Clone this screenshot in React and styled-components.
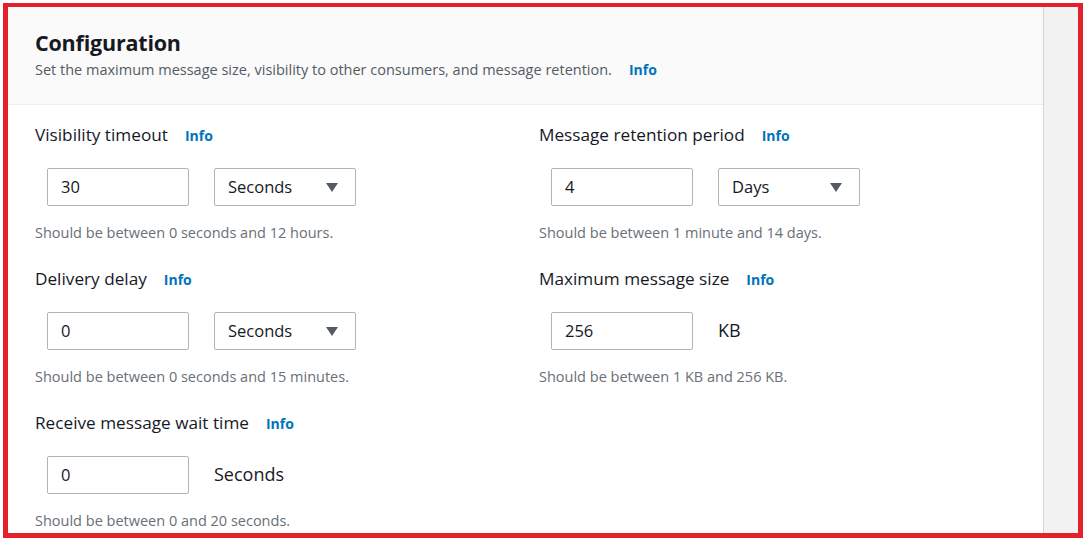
import styled, { createGlobalStyle } from 'styled-components';

const GlobalStyle = createGlobalStyle`
  body {
    margin: 0;
    background: #fff;
    font-family: "Open Sans", "Noto Sans", Arial, sans-serif;
    color: #16191f;
  }
`;

const Frame = styled.div`
  box-sizing: border-box;
  margin: 3px;
  width: 1080px;
  height: 535px;
  border: 5px solid #e4202c;
  border-top-width: 4px;
  display: flex;
  overflow: hidden;
`;

const Card = styled.section`
  flex: 1;
  min-width: 0;
  display: flex;
  flex-direction: column;
  background: #fff;
`;

const Gutter = styled.div`
  flex: 0 0 34px;
  background: #f2f2f2;
  border-left: 1px solid #d5d5d5;
`;

const Header = styled.header`
  flex-shrink: 0;
  background: #fafafa;
  border-bottom: 1px solid #eaeded;
  padding: 21px 27px 0;
  height: 76px;
`;

const Title = styled.h2`
  margin: 0;
  font-size: 21.5px;
  line-height: 30px;
  font-weight: 700;
  color: #16191f;
  letter-spacing: -0.2px;
`;

const Subtitle = styled.p`
  margin: 2px 0 0;
  font-size: 14.5px;
  line-height: 20px;
  color: #545b64;
`;

const InfoLink = styled.a`
  margin-left: 17px;
  font-size: 14px;
  font-weight: 700;
  color: #0073bb;
  text-decoration: none;
`;

const Body = styled.div`
  flex-shrink: 0;
  display: grid;
  grid-template-columns: 504px 504px;
  padding: 19px 27px 0;
`;

const Column = styled.div`
  display: flex;
  flex-direction: column;
`;

const Field = styled.div`
  height: 144px;
  display: flex;
  flex-direction: column;
`;

const Label = styled.div`
  font-size: 17.2px;
  line-height: 22px;
  color: #16191f;
`;

const Controls = styled.div`
  display: flex;
  align-items: center;
  gap: 25px;
  margin: 21px 0 0 12px;
  height: 38px;
`;

const Input = styled.div`
  box-sizing: border-box;
  width: 142px;
  height: 38px;
  border: 1px solid #aab7b8;
  border-radius: 2px;
  padding: 0 13px 2px;
  display: flex;
  align-items: center;
  font-size: 16.5px;
  color: #16191f;
  background: #fff;
`;

const Select = styled(Input)`
  justify-content: space-between;
  padding: 0 17px 2px 13px;
`;

const Caret = styled.span`
  margin-top: 2px;
  width: 0;
  height: 0;
  border-left: 6px solid transparent;
  border-right: 6px solid transparent;
  border-top: 9px solid #545b64;
`;

const Unit = styled.span`
  font-size: 18px;
  color: #16191f;
  padding-bottom: 2px;
`;

const Hint = styled.div`
  margin-top: 17px;
  font-size: 14.5px;
  line-height: 20px;
  color: #687078;
`;

const left = [
  { label: 'Visibility timeout', value: '30', select: 'Seconds', hint: 'Should be between 0 seconds and 12 hours.' },
  { label: 'Delivery delay', value: '0', select: 'Seconds', hint: 'Should be between 0 seconds and 15 minutes.' },
  { label: 'Receive message wait time', value: '0', unit: 'Seconds', hint: 'Should be between 0 and 20 seconds.' },
];

const right = [
  { label: 'Message retention period', value: '4', select: 'Days', hint: 'Should be between 1 minute and 14 days.' },
  { label: 'Maximum message size', value: '256', unit: 'KB', hint: 'Should be between 1 KB and 256 KB.' },
];

const FormField = ({ label, value, select, unit, hint }) => (
  <Field>
    <Label>
      {label}
      <InfoLink href="#">Info</InfoLink>
    </Label>
    <Controls>
      <Input>{value}</Input>
      {select && (
        <Select>
          {select}
          <Caret />
        </Select>
      )}
      {unit && <Unit>{unit}</Unit>}
    </Controls>
    <Hint>{hint}</Hint>
  </Field>
);

const App = () => (
  <>
    <GlobalStyle />
    <Frame>
      <Card>
        <Header>
          <Title>Configuration</Title>
          <Subtitle>
            Set the maximum message size, visibility to other consumers, and message retention.
            <InfoLink href="#">Info</InfoLink>
          </Subtitle>
        </Header>
        <Body>
          <Column>
            {left.map((f) => (
              <FormField key={f.label} {...f} />
            ))}
          </Column>
          <Column>
            {right.map((f) => (
              <FormField key={f.label} {...f} />
            ))}
          </Column>
        </Body>
      </Card>
      <Gutter />
    </Frame>
  </>
);

export default App;
